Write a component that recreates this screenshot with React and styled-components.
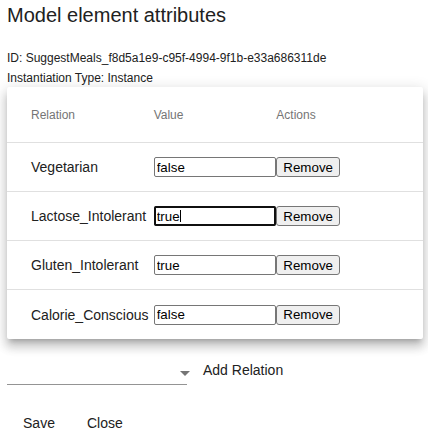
import React from "react";
import styled, { createGlobalStyle } from "styled-components";

const GlobalStyle = createGlobalStyle`
  html, body { margin: 0; padding: 0; background: #fff; }
  body { font-family: "Liberation Sans", Arial, sans-serif; color: rgba(0,0,0,0.87); }
  * { box-sizing: border-box; }
`;

const Page = styled.div`
  padding: 3px 5px 0 7px;
  width: 428px;
  height: 434px;
  overflow: hidden;
`;

const Title = styled.h2`
  margin: 0;
  font-size: 20px;
  line-height: 24px;
  font-weight: 400;
  color: #212121;
`;

const Meta = styled.div`
  margin-top: 21px;
  font-size: 12px;
  line-height: 20px;
  color: #212121;
`;

const Paper = styled.div`
  margin-top: -1px;
  background: #fff;
  border-radius: 2px;
  box-shadow: 0 5px 5px -3px rgba(0,0,0,0.2), 0 8px 10px 1px rgba(0,0,0,0.14),
    0 3px 14px 2px rgba(0,0,0,0.12);
`;

const Row = styled.div`
  display: grid;
  grid-template-columns: repeat(3, 1fr);
  align-items: center;
  padding: 0 24px;
  height: ${(p) => p.$height}px;
  border-bottom: ${(p) => (p.$last ? "none" : "1px solid #e0e0e0")};
`;

const HeaderCell = styled.div`
  font-size: 12px;
  color: #757575;
`;

const LabelCell = styled.div`
  font-size: 14px;
  color: #212121;
  white-space: nowrap;
`;

const InputWrap = styled.div`
  position: relative;
  display: flex;
`;

const ValueInput = styled.input`
  width: 100%;
  height: 20px;
  margin: 0;
  padding: 1px 2px;
  border: 1px solid #767676;
  border-radius: 2px;
  font-family: "Liberation Sans", Arial, sans-serif;
  font-size: 13.333px;
  color: #000;
  background: #fff;
  outline: ${(p) => (p.$focused ? "2px solid #101010" : "none")};
  outline-offset: -2px;
`;

const Caret = styled.span`
  position: absolute;
  left: 26px;
  top: 4px;
  width: 1px;
  height: 12px;
  background: #000;
`;

const RemoveButton = styled.button`
  justify-self: start;
  height: 20px;
  margin: 0;
  padding: 1px 6px;
  border: 1px solid #767676;
  border-radius: 3px;
  background: #efefef;
  font-family: "Liberation Sans", Arial, sans-serif;
  font-size: 13.333px;
  color: #000;
`;

const Controls = styled.div`
  display: flex;
  align-items: center;
  margin-top: 16px;
  height: 30px;
`;

const SelectField = styled.div`
  position: relative;
  width: 180px;
  height: 30px;
  border-bottom: 1px solid #949494;
`;

const ArrowIcon = styled.svg`
  position: absolute;
  left: 166px;
  top: 6px;
`;

const AddButton = styled.button`
  margin-left: 8px;
  padding: 6px 8px;
  border: none;
  background: transparent;
  font-family: "Liberation Sans", Arial, sans-serif;
  font-size: 14px;
  color: #212121;
`;

const Actions = styled.div`
  display: flex;
  margin-top: 20px;
`;

const ActionButton = styled.button`
  min-width: 64px;
  height: 36px;
  padding: 0 16px;
  border: none;
  background: transparent;
  font-family: "Liberation Sans", Arial, sans-serif;
  font-size: 14px;
  color: #212121;
`;

const rows = [
  { name: "Vegetarian", value: "false" },
  { name: "Lactose_Intolerant", value: "true", focused: true },
  { name: "Gluten_Intolerant", value: "true" },
  { name: "Calorie_Conscious", value: "false" },
];

export default function App() {
  return (
    <>
      <GlobalStyle />
      <Page>
        <Title>Model element attributes</Title>
        <Meta>
          <div>ID: SuggestMeals_f8d5a1e9-c95f-4994-9f1b-e33a686311de</div>
          <div>Instantiation Type: Instance</div>
        </Meta>
        <Paper>
          <Row $height={56}>
            <HeaderCell>Relation</HeaderCell>
            <HeaderCell>Value</HeaderCell>
            <HeaderCell>Actions</HeaderCell>
          </Row>
          {rows.map((r, i) => (
            <Row key={r.name} $height={49} $last={i === rows.length - 1}>
              <LabelCell>{r.name}</LabelCell>
              <InputWrap>
                <ValueInput defaultValue={r.value} $focused={r.focused} readOnly />
                {r.focused && <Caret />}
              </InputWrap>
              <RemoveButton>Remove</RemoveButton>
            </Row>
          ))}
        </Paper>
        <Controls>
          <SelectField>
            <ArrowIcon width="24" height="24" viewBox="0 0 24 24">
              <path d="M7 10l5 5 5-5z" fill="#757575" />
            </ArrowIcon>
          </SelectField>
          <AddButton>Add Relation</AddButton>
        </Controls>
        <Actions>
          <ActionButton>Save</ActionButton>
          <ActionButton>Close</ActionButton>
        </Actions>
      </Page>
    </>
  );
}
